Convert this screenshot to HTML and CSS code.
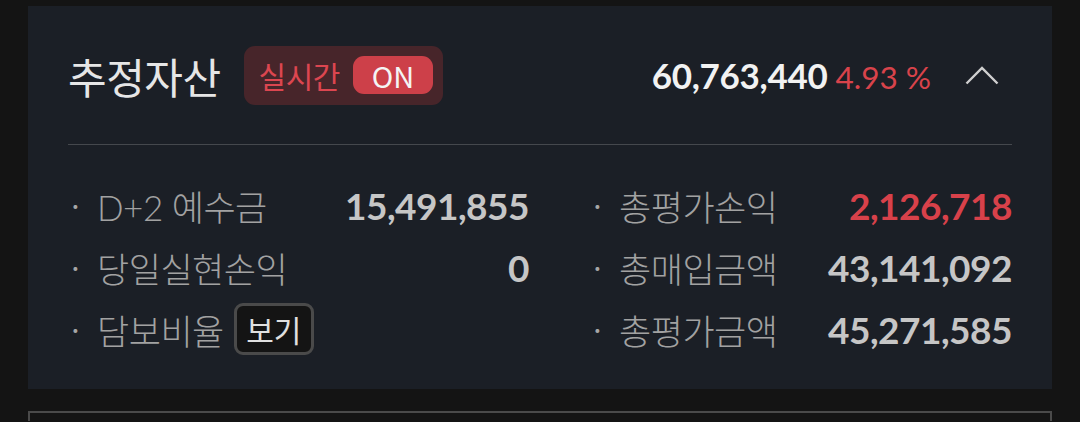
FILE: index.html
```html
<!DOCTYPE html>
<html lang="ko">
<head>
<meta charset="utf-8">
<link rel="stylesheet" href="styles.css">
</head>
<body>
<section class="card">
  <header class="head">
    <h1 class="title">추정자산</h1>
    <div class="live">
      <span class="live-label">실시간</span>
      <span class="live-on">ON</span>
    </div>
    <div class="summary">
      <span class="total">60,763,440</span>
      <span class="rate">4.93 %</span>
    </div>
    <svg class="chev" width="34" height="20" viewBox="0 0 34 20"><polyline points="1.5,18.5 17,3 32.5,18.5" fill="none" stroke="#cfcfcf" stroke-width="2.4"/></svg>
  </header>
  <div class="grid">
    <div class="row"><span class="dot">·</span><span class="label">D+2 예수금</span><span class="val">15,491,855</span></div>
    <div class="row"><span class="dot">·</span><span class="label">총평가손익</span><span class="val red">2,126,718</span></div>
    <div class="row"><span class="dot">·</span><span class="label">당일실현손익</span><span class="val">0</span></div>
    <div class="row"><span class="dot">·</span><span class="label">총매입금액</span><span class="val">43,141,092</span></div>
    <div class="row"><span class="dot">·</span><span class="label">담보비율</span><span class="btn">보기</span></div>
    <div class="row"><span class="dot">·</span><span class="label">총평가금액</span><span class="val">45,271,585</span></div>
  </div>
</section>
<section class="next"></section>
</body>
</html>
```
FILE: styles.css
```css
html, body {
  margin: 0;
  padding: 0;
  background: #141414;
  font-family: Lato, "Noto Sans CJK KR", sans-serif;
  overflow: hidden;
}
.card {
  margin: 6px 0 0 28px;
  width: 1024px;
  box-sizing: border-box;
  padding: 0 40px;
  background: #1b1f26;
}
.head {
  height: 139px;
  display: flex;
  align-items: center;
  border-bottom: 1.5px solid #45484d;
  box-sizing: border-box;
}
.title {
  margin: 0;
  font-family: "Noto Sans CJK KR", sans-serif;
  font-weight: 400;
  font-size: 42px;
  color: #e6e6e6;
  letter-spacing: -0.5px;
}
.live {
  margin-left: 23px;
  height: 59px;
  width: 199px;
  box-sizing: border-box;
  background: #47252a;
  border-radius: 11px;
  display: flex;
  align-items: center;
  padding-left: 15px;
}
.live-label {
  font-family: "Noto Sans CJK KR", sans-serif;
  font-size: 30px;
  color: #dc4650;
  letter-spacing: -0.5px;
}
.live-on {
  margin-left: 13px;
  width: 80px;
  height: 38px;
  border-radius: 11px;
  background: #cd4049;
  color: #f4f4f4;
  font-family: "Noto Sans CJK KR", sans-serif;
  font-size: 29px;
  display: flex;
  align-items: center;
  justify-content: center;
}
.summary {
  margin-left: auto;
  display: flex;
  align-items: baseline;
  gap: 8px;
}
.total {
  font-weight: 700;
  font-size: 35px;
  color: #f2f2f2;
  letter-spacing: -0.3px;
}
.rate {
  font-size: 31.5px;
  color: #d8434b;
}
.chev {
  margin-left: 34px;
  margin-right: 13px;
  display: block;
}
.grid {
  display: grid;
  grid-template-columns: 461px 1fr;
  column-gap: 61px;
  padding: 29px 0;
}
.row {
  height: 62px;
  display: flex;
  align-items: center;
}
.dot {
  width: 29px;
  padding-left: 4px;
  box-sizing: border-box;
  font-size: 26px;
  color: #a6a6a6;
}
.label {
  font-family: Lato, "Noto Sans CJK KR", sans-serif;
  font-weight: 300;
  font-size: 35px;
  color: #a2a2a2;
  letter-spacing: -0.5px;
}
.val {
  margin-left: auto;
  font-weight: 700;
  font-size: 37px;
  color: #c6c6c6;
  letter-spacing: -0.5px;
}
.red { color: #d8414a; }
.btn {
  margin-left: 10px;
  width: 80px;
  height: 52px;
  box-sizing: border-box;
  border: 3px solid #4a4a4a;
  border-radius: 9px;
  background: #141414;
  color: #e0e0e0;
  font-family: "Noto Sans CJK KR", sans-serif;
  font-size: 30px;
  display: flex;
  align-items: center;
  justify-content: center;
}
.next {
  margin: 22px 0 0 28px;
  width: 1024px;
  height: 10px;
  box-sizing: border-box;
  border: 2px solid #4a4a4a;
  border-bottom: 0;
  background: #141414;
}
```
